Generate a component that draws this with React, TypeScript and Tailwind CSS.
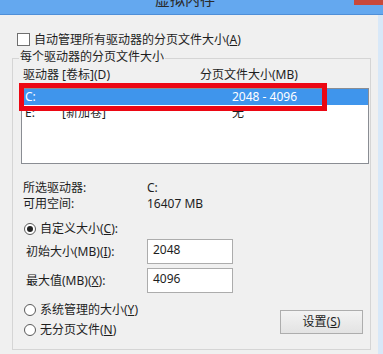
import React from 'react';

const font = { fontFamily: '"Noto Sans", "Noto Sans CJK SC", sans-serif' };

const Radio = ({ checked }: { checked?: boolean }) => (
  <span className="w-[12px] h-[12px] rounded-full border border-[#5a5a5a] bg-white flex items-center justify-center shrink-0">
    {checked && <span className="w-[6px] h-[6px] rounded-full bg-[#222]" />}
  </span>
);

export default function App() {
  return (
    <div
      className="w-[383px] h-[354px] bg-[#f0f0f0] overflow-hidden flex flex-col text-[12px] text-[#1e1e1e]"
      style={font}
    >
      {/* title bar, its caption is mostly scrolled off the top */}
      <div className="h-[15px] shrink-0 bg-[#64a8ef] border-b border-[#4f8fd8] flex relative overflow-hidden">
        <div className="flex-1 flex justify-center">
          <span className="text-[15px] leading-[16px] -mt-[9px] ml-[16px] text-[#2b2b2b]">虚拟内存</span>
        </div>
        <div className="w-[29px] h-[5px] bg-[#c9483b]" />
      </div>

      <div className="flex flex-1">
        <div className="flex-1 pl-[12px] flex flex-col">
          {/* auto manage */}
          <div className="flex items-center h-[13px] mt-[18px] ml-[5px]">
            <span className="w-[13px] h-[13px] border border-[#6f6f6f] bg-white shrink-0" />
            <span className="ml-[4px] leading-[16px]">
              自动管理所有驱动器的分页文件大小(<span className="underline">A</span>)
            </span>
          </div>

          {/* group box */}
          <div className="relative mt-[12px] w-[359px] h-[292px] border border-[#d5d5d5] flex flex-col">
            <span className="absolute -top-[10px] left-[6px] px-[1px] bg-[#f0f0f0] leading-[16px]">
              每个驱动器的分页文件大小
            </span>

            <div className="flex mt-[8px] leading-[16px] pl-[10px]">
              <span className="w-[177px]">驱动器 [卷标](D)</span>
              <span>分页文件大小(MB)</span>
            </div>

            {/* list */}
            <div className="relative mt-[5px] ml-[8px] w-[348px] h-[76px] border border-[#8a8d93] bg-white">
              <div className="h-[16px] bg-[#3f95ec] text-white flex items-center leading-[16px]">
                <span className="pl-[3px] w-[210px]">C:</span>
                <span>2048 - 4096</span>
              </div>
              <div className="h-[16px] flex items-center leading-[16px]">
                <span className="pl-[3px] w-[40px]">E:</span>
                <span className="w-[170px]">[新加卷]</span>
                <span>无</span>
              </div>
              <div className="absolute -left-[3px] -top-[6px] w-[308px] h-[28px] border-[5px] border-[#ec0713]" />
            </div>

            {/* info */}
            <div className="mt-[16px] pl-[10px] leading-[16px]">
              <div className="flex">
                <span className="w-[124px]">所选驱动器:</span>
                <span>C:</span>
              </div>
              <div className="flex">
                <span className="w-[124px]">可用空间:</span>
                <span>16407 MB</span>
              </div>
            </div>

            <div className="flex items-center mt-[9px] pl-[11px] h-[16px]">
              <Radio checked />
              <span className="ml-[4px]">
                自定义大小(<span className="underline">C</span>):
              </span>
            </div>

            <div className="flex items-center mt-[2px] pl-[13px]">
              <span className="w-[121px]">
                初始大小(MB)(<span className="underline">I</span>):
              </span>
              <div className="w-[86px] h-[25px] border border-[#acacac] bg-white pl-[5px] pt-[2px] leading-[16px]">
                2048
              </div>
            </div>

            <div className="flex items-center mt-[4px] pl-[13px]">
              <span className="w-[121px]">
                最大值(MB)(<span className="underline">X</span>):
              </span>
              <div className="w-[86px] h-[25px] border border-[#acacac] bg-white pl-[5px] pt-[2px] leading-[16px]">
                4096
              </div>
            </div>

            <div className="flex mt-[9px] pl-[11px] pr-[7px]">
              <div className="flex flex-col">
                <div className="flex items-center h-[16px]">
                  <Radio />
                  <span className="ml-[4px]">
                    系统管理的大小(<span className="underline">Y</span>)
                  </span>
                </div>
                <div className="flex items-center h-[16px] mt-[4px]">
                  <Radio />
                  <span className="ml-[4px]">
                    无分页文件(<span className="underline">N</span>)
                  </span>
                </div>
              </div>
              <div className="flex-1" />
              <div className="mt-[8px] w-[83px] h-[24px] border border-[#adadad] bg-gradient-to-b from-[#f3f3f3] to-[#e3e3e3] flex items-center justify-center">
                设置(<span className="underline">S</span>)
              </div>
            </div>
          </div>
        </div>
        <div className="w-[5px] bg-[#d8e8f8]" />
      </div>
    </div>
  );
}
